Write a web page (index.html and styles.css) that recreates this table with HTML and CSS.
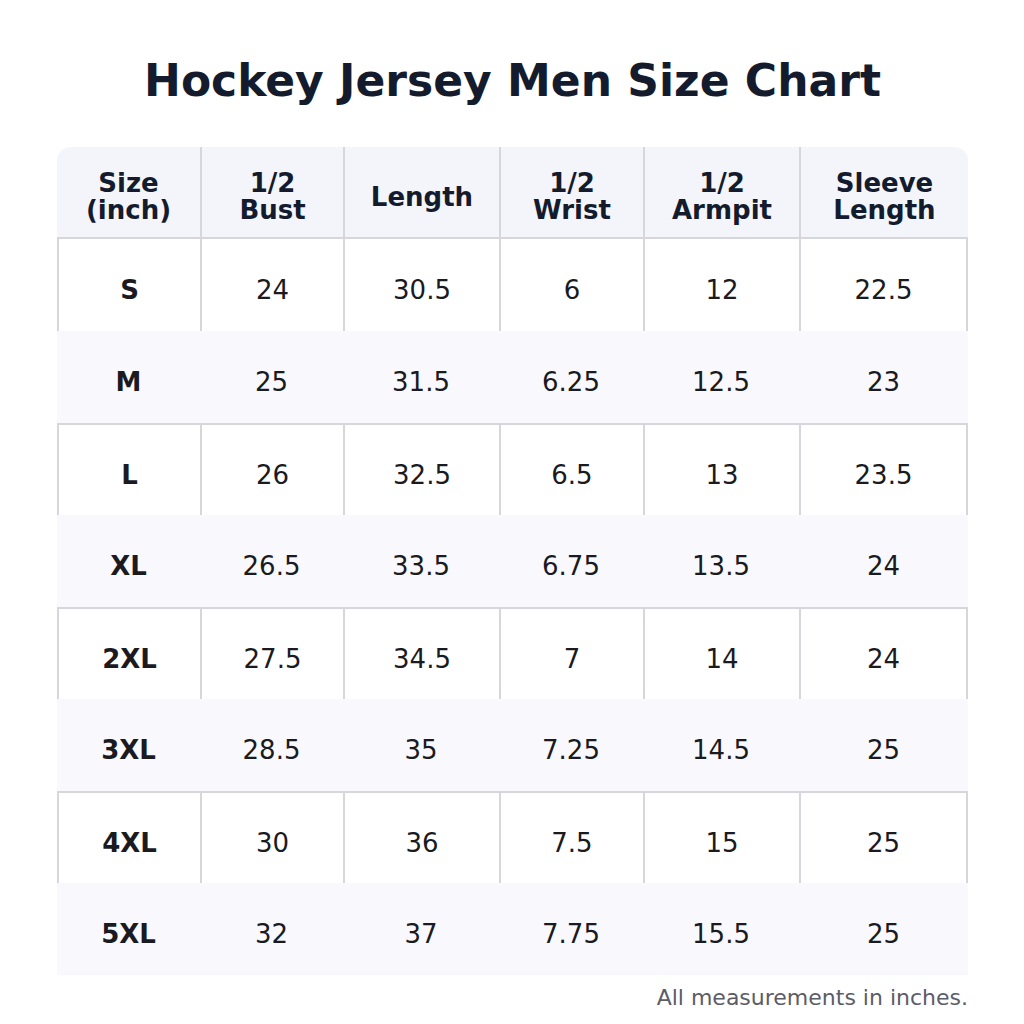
FILE: index.html
```html
<!DOCTYPE html>
<html>
<head>
<meta charset="utf-8">
<link rel="stylesheet" href="styles.css">
</head>
<body>
<div class="page">
  <h1 class="title">Hockey Jersey Men Size Chart</h1>
  <table class="chart">
    <colgroup>
      <col class="c1"><col class="c2"><col class="c3"><col class="c4"><col class="c5"><col class="c6">
    </colgroup>
    <thead>
      <tr>
        <th>Size<br>(inch)</th><th>1/2<br>Bust</th><th>Length</th><th>1/2<br>Wrist</th><th>1/2<br>Armpit</th><th>Sleeve<br>Length</th>
      </tr>
    </thead>
    <tbody>
      <tr class="plain"><td class="size">S</td><td>24</td><td>30.5</td><td>6</td><td>12</td><td>22.5</td></tr>
      <tr class="shade"><td class="size">M</td><td>25</td><td>31.5</td><td>6.25</td><td>12.5</td><td>23</td></tr>
      <tr class="plain"><td class="size">L</td><td>26</td><td>32.5</td><td>6.5</td><td>13</td><td>23.5</td></tr>
      <tr class="shade"><td class="size">XL</td><td>26.5</td><td>33.5</td><td>6.75</td><td>13.5</td><td>24</td></tr>
      <tr class="plain"><td class="size">2XL</td><td>27.5</td><td>34.5</td><td>7</td><td>14</td><td>24</td></tr>
      <tr class="shade"><td class="size">3XL</td><td>28.5</td><td>35</td><td>7.25</td><td>14.5</td><td>25</td></tr>
      <tr class="plain"><td class="size">4XL</td><td>30</td><td>36</td><td>7.5</td><td>15</td><td>25</td></tr>
      <tr class="shade"><td class="size">5XL</td><td>32</td><td>37</td><td>7.75</td><td>15.5</td><td>25</td></tr>
    </tbody>
  </table>
  <p class="note">All measurements in inches.</p>
</div>
</body>
</html>
```
FILE: styles.css
```css
html, body {
  margin: 0;
  padding: 0;
  background: #ffffff;
}
body {
  font-family: "DejaVu Sans", sans-serif;
  color: #1a1a1f;
}
.page {
  width: 911px;
  margin: 0 auto;
  padding-top: 56px;
  padding-left: 1px;
}
.title {
  margin: 0 0 41px;
  font-size: 44px;
  line-height: 50px;
  font-weight: bold;
  text-align: center;
  color: #141b2d;
}
.chart {
  width: 911px;
  table-layout: fixed;
  border-collapse: separate;
  border-spacing: 0;
}
.c1 { width: 143px; }
.c2 { width: 143px; }
.c3 { width: 156px; }
.c4 { width: 144px; }
.c5 { width: 156px; }
.c6 { width: 169px; }
.chart th {
  height: 92px;
  box-sizing: border-box;
  padding: 10px 0 0;
  background: #f3f5fb;
  color: #141b2d;
  font-size: 26px;
  line-height: 27px;
  font-weight: bold;
  text-align: center;
  vertical-align: middle;
  border-bottom: 2px solid #d6d6dc;
  border-left: 2px solid #d6d6dc;
}
.chart th:first-child {
  border-left: none;
  border-top-left-radius: 14px;
}
.chart th:last-child {
  border-top-right-radius: 14px;
}
.chart td {
  height: 92px;
  box-sizing: border-box;
  padding: 10px 0 0;
  font-size: 26px;
  text-align: center;
  vertical-align: middle;
  color: #1a1a1f;
}
.chart td.size {
  font-weight: bold;
}
.plain td {
  background: #ffffff;
  border-left: 2px solid #d6d6dc;
}
.plain td:last-child {
  border-right: 2px solid #d6d6dc;
}
.shade + .plain td {
  border-top: 2px solid #d6d6dc;
}
.shade td {
  background: #f9f9fd;
}
.note {
  margin: 11px 0 0;
  font-size: 22px;
  line-height: 24px;
  text-align: right;
  color: #5c5c66;
}
```
